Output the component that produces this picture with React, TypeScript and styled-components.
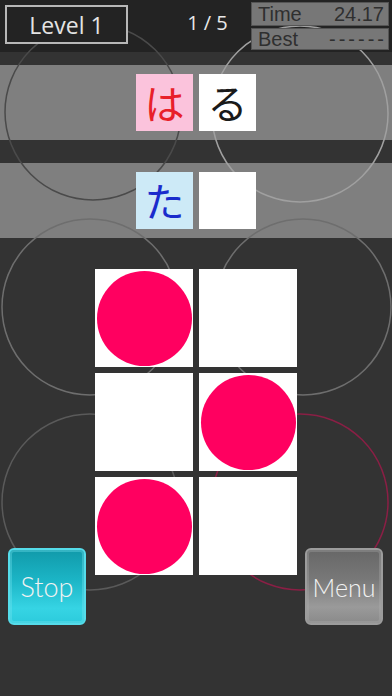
import React from "react";
import styled, { createGlobalStyle } from "styled-components";

const Global = createGlobalStyle`
  html, body { margin: 0; padding: 0; background: #333333; }
  body { width: 392px; height: 696px; overflow: hidden; }
`;

const Screen = styled.div`
  position: relative;
  width: 392px;
  height: 696px;
  background: #333333;
  font-family: "Liberation Sans", Arial, sans-serif;
  overflow: hidden;
`;

const Decor = styled.svg`
  position: absolute;
  left: 0;
  top: 0;
  z-index: 1;
  pointer-events: none;
`;

const Header = styled.div`
  height: 52px;
  background: #232323;
  display: grid;
  grid-template-columns: 123px 1fr 138px;
  align-items: start;
  padding: 5px 3px 0 5px;
  box-sizing: border-box;
`;

const LevelBox = styled.div`
  position: relative;
  z-index: 2;
  height: 39px;
  box-sizing: border-box;
  border: 2px solid #b8b8b8;
  background: #232323;
  color: #e4e4e4;
  font-family: "Open Sans", "Liberation Sans", sans-serif;
  font-size: 23px;
  display: flex;
  align-items: center;
  justify-content: center;
`;

const Progress = styled.div`
  color: #e8e8e8;
  font-family: "Open Sans", "Liberation Sans", sans-serif;
  font-size: 20px;
  text-align: center;
  padding-left: 36px;
  line-height: 46px;
  margin-top: -5px;
`;

const Stats = styled.div`
  position: relative;
  z-index: 2;
  display: flex;
  flex-direction: column;
  gap: 2px;
  margin-top: -3px;
`;

const StatRow = styled.div<{ $h: number }>`
  height: ${(p) => p.$h}px;
  background: #777777;
  border: 1px solid #555;
  box-sizing: border-box;
  display: flex;
  justify-content: space-between;
  align-items: center;
  padding: 0 4px 0 6px;
  color: #2f2f2f;
  font-family: "Liberation Sans", Arial, sans-serif;
  font-size: 20px;
  line-height: 19px;
`;

const Dashes = styled.span`
  letter-spacing: 3px;
  margin-right: -3px;
`;

const Band = styled.div<{ $top: number }>`
  margin-top: ${(p) => p.$top}px;
  height: 75px;
  background: #7f7f7f;
  display: flex;
  justify-content: center;
  align-items: center;
  gap: 6px;
`;

const Tile = styled.div<{ $bg: string; $color: string }>`
  position: relative;
  z-index: 2;
  width: 57px;
  height: 57px;
  background: ${(p) => p.$bg};
  color: ${(p) => p.$color};
  font-family: "Noto Sans CJK JP", sans-serif;
  font-size: 40px;
  line-height: 57px;
  text-align: center;
`;

const PlayArea = styled.div`
  margin-top: 31px;
  display: grid;
  grid-template-columns: 1fr 202px 1fr;
  height: 356px;
`;

const Board = styled.div`
  position: relative;
  z-index: 2;
  align-self: start;
  display: grid;
  grid-template-columns: 98px 98px;
  grid-auto-rows: 98px;
  gap: 6px;
`;

const Cell = styled.div`
  background: #ffffff;
  display: flex;
  align-items: center;
  justify-content: center;
`;

const Dot = styled.div`
  width: 95px;
  height: 95px;
  border-radius: 50%;
  background: #ff0060;
`;

const Side = styled.div<{ $align: string }>`
  display: flex;
  align-items: flex-end;
  justify-content: ${(p) => p.$align};
  padding: ${(p) => (p.$align === "flex-start" ? "0 0 0 8px" : "0 9px 0 0")};
`;

const GameButton = styled.button<{ $kind: "stop" | "menu" }>`
  position: relative;
  z-index: 2;
  width: 78px;
  height: 77px;
  border-radius: 6px;
  box-sizing: border-box;
  border: 2px solid ${(p) => (p.$kind === "stop" ? "#55dcea" : "#9c9c9c")};
  background: ${(p) =>
    p.$kind === "stop"
      ? "linear-gradient(180deg, #119aaa 0%, #1bb4c5 40%, #36d4e4 80%, #2ccbdc 100%)"
      : "linear-gradient(180deg, #676767 0%, #787878 40%, #9a9a9a 78%, #8a8a8a 100%)"};
  box-shadow: inset 0 0 0 2px ${(p) => (p.$kind === "stop" ? "rgba(120,230,240,0.35)" : "rgba(180,180,180,0.3)")};
  color: #f2f2f2;
  font-family: "Lato", "DejaVu Sans", sans-serif;
  font-weight: 300;
  font-size: ${(p) => (p.$kind === "stop" ? 27 : 25)}px;
  padding: 0;
  cursor: pointer;
`;

const circles = [
  { cx: 93, cy: 112, stroke: "#4a4a4a" },
  { cx: 300, cy: 114, stroke: "#a0a0a0" },
  { cx: 90, cy: 307, stroke: "#6e6e6e" },
  { cx: 303, cy: 307, stroke: "#6e6e6e" },
  { cx: 90, cy: 502, stroke: "#5a5a5a" },
  { cx: 300, cy: 502, stroke: "#8a1f45" },
];

export default function App() {
  return (
    <>
      <Global />
      <Screen>
        <Decor width={392} height={696} viewBox="0 0 392 696">
          {circles.map((c, i) => (
            <circle key={i} cx={c.cx} cy={c.cy} r={88} fill="none" stroke={c.stroke} strokeWidth={1.5} />
          ))}
        </Decor>
        <Header>
          <LevelBox>Level 1</LevelBox>
          <Progress>1 / 5</Progress>
          <Stats>
            <StatRow $h={24}>
              <span>Time</span>
              <span>24.17</span>
            </StatRow>
            <StatRow $h={22}>
              <span>Best</span>
              <Dashes>------</Dashes>
            </StatRow>
          </Stats>
        </Header>
        <Band $top={13}>
          <Tile $bg="#fbc3dc" $color="#e8202a">は</Tile>
          <Tile $bg="#ffffff" $color="#1a1a1a">る</Tile>
        </Band>
        <Band $top={23}>
          <Tile $bg="#cdeaf7" $color="#1a2ccc">た</Tile>
          <Tile $bg="#ffffff" $color="#1a1a1a"></Tile>
        </Band>
        <PlayArea>
          <Side $align="flex-start">
            <GameButton $kind="stop">Stop</GameButton>
          </Side>
          <Board>
            <Cell><Dot /></Cell>
            <Cell />
            <Cell />
            <Cell><Dot /></Cell>
            <Cell><Dot /></Cell>
            <Cell />
          </Board>
          <Side $align="flex-end">
            <GameButton $kind="menu">Menu</GameButton>
          </Side>
        </PlayArea>
      </Screen>
    </>
  );
}
